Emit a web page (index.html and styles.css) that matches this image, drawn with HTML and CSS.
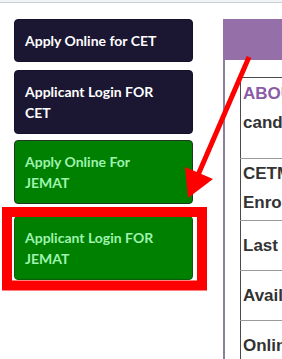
FILE: index.html
```html
<!DOCTYPE html>
<html lang="en">
<head>
<meta charset="utf-8">
<title>Admissions</title>
<link rel="stylesheet" href="styles.css">
</head>
<body>
<div class="topbar"></div>
<div class="layout">
  <aside class="sidebar">
    <a class="btn btn-navy">Apply Online for CET</a>
    <a class="btn btn-navy btn-second">Applicant Login FOR<br>CET</a>
    <a class="btn btn-green btn-third">Apply Online For<br>JEMAT</a>
    <a class="btn btn-green btn-fourth">Applicant Login FOR<br>JEMAT</a>
  </aside>
  <section class="panel">
    <div class="panel-head"></div>
    <div class="panel-body">
      <table class="info">
        <tr class="row-about"><td><span class="about">ABOUT CETMAT</span><br>candidates must read</td></tr>
        <tr class="row-cet"><td>CETMAT 2024<br>Enrolment Start</td></tr>
        <tr class="row-single"><td>Last Date</td></tr>
        <tr class="row-single"><td>Available Seats</td></tr>
        <tr class="row-single"><td>Online Payment</td></tr>
      </table>
    </div>
  </section>
</div>
<svg class="annot" width="282" height="359" viewBox="0 0 282 359">
  <rect x="7" y="212" width="195" height="73.5" fill="none" stroke="#fe0000" stroke-width="10"/>
  <line x1="249" y1="57" x2="198" y2="175" stroke="#fe0000" stroke-width="5"/>
  <polygon points="188,198 185,167 213,179" fill="#fe0000"/>
</svg>
</body>
</html>
```
FILE: styles.css
```css
html, body {
  margin: 0;
  padding: 0;
  overflow: hidden;
  background: #ffffff;
}
body {
  position: relative;
  width: 282px;
  height: 359px;
  font-family: "Liberation Sans", Arial, sans-serif;
}
.topbar {
  height: 2px;
  background: #f1f3f5;
  border-bottom: 1px solid #c9d0d8;
}
.layout {
  display: flex;
  align-items: flex-start;
  padding-top: 16px;
}
.sidebar {
  display: flex;
  flex-direction: column;
  padding-left: 14px;
  width: 179px;
  flex: none;
}
.btn {
  display: block;
  box-sizing: border-box;
  width: 179px;
  padding: 10px 10px;
  border: 1px solid #222;
  border-radius: 4px;
  font-family: Lato, "Liberation Sans", sans-serif;
  font-weight: 700;
  font-size: 14px;
  line-height: 21px;
  text-decoration: none;
}
.btn-navy {
  background: #1b1632;
  color: #ffffff;
  border-color: #15112a;
}
.btn-green {
  background: #008000;
  color: #9ef3ad;
  border-color: #1f3a1f;
}
.btn-second { margin-top: 8px; }
.btn-third { margin-top: 6px; }
.btn-fourth { margin-top: 12px; border-color: #0a5c0a; }
.panel {
  flex: none;
  width: 400px;
  margin-left: 30px;
  border-left: 2px solid #8d7f9b;
  height: 400px;
}
.panel-head {
  height: 41px;
  margin-left: -2px;
  background: #946fa8;
}
.panel-body {
  padding: 17px 0 0 15px;
}
.info {
  border-collapse: collapse;
  width: 360px;
  border-top: 1px solid #4a4a4a;
  border-left: 1px solid #4a4a4a;
  font-size: 17px;
  font-weight: 700;
  color: #333333;
  line-height: 29px;
}
.info td {
  padding: 10px 2px;
  border-bottom: 1px solid #9a9a9a;
  white-space: nowrap;
}
.row-about td { padding: 1px 2px 21px; }
.row-cet td { padding: 0 2px 3px; }
.about { color: #8a5ba6; }
.annot {
  position: absolute;
  left: 0;
  top: 0;
  pointer-events: none;
}
```
